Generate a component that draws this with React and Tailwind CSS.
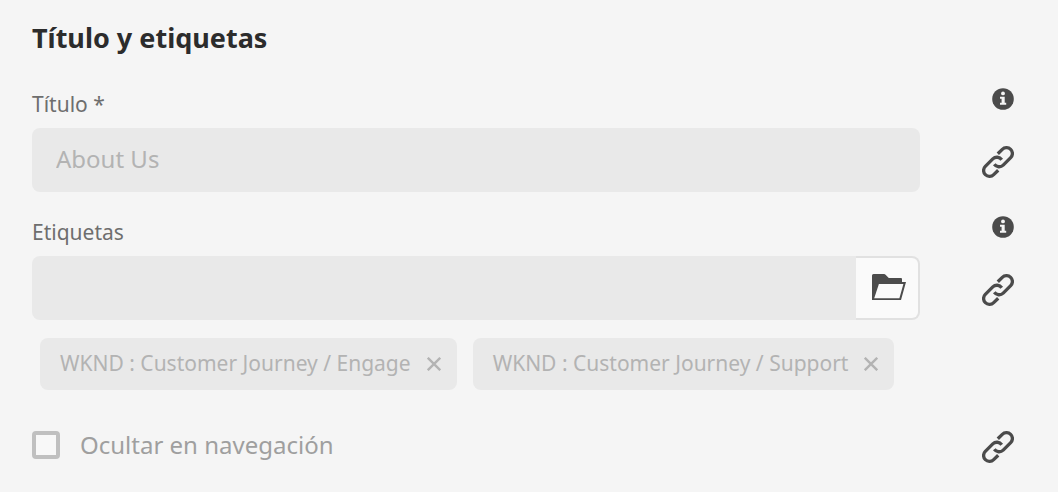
function InfoIcon() {
  return (
    <svg viewBox="0 0 22 22" className="size-[22px]" aria-hidden="true">
      <circle cx="11" cy="11" r="10.8" fill="#4b4b4b" />
      <circle cx="11" cy="5.4" r="1.9" fill="#f5f5f5" />
      <path d="M8 8.7h4.7v6.1h1.5v2H8v-2h1.6v-4.1H8z" fill="#f5f5f5" />
    </svg>
  );
}

function LinkIcon() {
  return (
    <svg
      viewBox="0 0 32 32"
      className="size-8"
      fill="none"
      stroke="#4b4b4b"
      strokeWidth="3.3"
      aria-hidden="true"
    >
      <path d="M15.8 7.8L20.3 3.4A5.9 5.9 0 0 1 28.7 11.7L21.2 19.1A5.9 5.9 0 0 1 12.3 18.3" />
      <path d="M16.2 24.2L11.7 28.6A5.9 5.9 0 0 1 3.3 20.3L10.8 12.9A5.9 5.9 0 0 1 19.7 13.7" />
    </svg>
  );
}

function FolderIcon() {
  return (
    <svg viewBox="0 0 34 26" className="h-[26px] w-[34px]" aria-hidden="true">
      <path
        d="M0 1.5Q0 0 1.5 0H12Q13 0 13.8 .9L16.8 4H29Q30 4 30 5V8H34L29 26H0Z"
        fill="#4b4b4b"
      />
      <path d="M6.9 10H31.4L27.4 24.2H2.2Z" fill="#fafafa" />
    </svg>
  );
}

function CrossIcon() {
  return (
    <svg viewBox="0 0 14 14" className="size-3.5" stroke="#b3b3b3" strokeWidth="2.4" aria-hidden="true">
      <path d="M.8 .8L13.2 13.2M13.2 .8L.8 13.2" />
    </svg>
  );
}

function InfoButton({ label }) {
  return (
    <button type="button" aria-label={label} className="mt-1 flex self-start justify-self-end">
      <InfoIcon />
    </button>
  );
}

function LinkButton({ label }) {
  return (
    <button type="button" aria-label={label} className="flex justify-self-end pt-1">
      <LinkIcon />
    </button>
  );
}

function Tag({ children }) {
  return (
    <li className="flex h-[52px] items-center gap-4 rounded-lg bg-[#e9e9e9] pr-4 pl-5 text-[21px] text-[#b3b3b3]">
      {children}
      <button type="button" aria-label={`Quitar ${children}`} className="flex">
        <CrossIcon />
      </button>
    </li>
  );
}

export default function App() {
  return (
    <form className="min-h-screen bg-[#f5f5f5] pt-5 pr-11 pb-6 pl-8 font-['Noto_Sans',sans-serif]">
      <h2 className="text-[27px] leading-9 font-bold text-[#2c2c2c]">Título y etiquetas</h2>

      <div className="mt-7 grid grid-cols-[1fr_94px] items-center gap-y-2">
        <label htmlFor="titulo" className="pt-1 text-[21px] leading-8 text-[#6e6e6e]">
          Título *
        </label>
        <InfoButton label="Información de título" />
        <input
          id="titulo"
          type="text"
          disabled
          defaultValue="About Us"
          className="h-16 w-full rounded-lg bg-[#e9e9e9] px-6 pb-1 text-[24px] text-[#b3b3b3]"
        />
        <LinkButton label="Herencia de título" />
      </div>

      <div className="mt-5 grid grid-cols-[1fr_94px] items-center gap-y-2">
        <label htmlFor="etiquetas" className="pt-1 text-[21px] leading-8 text-[#6e6e6e]">
          Etiquetas
        </label>
        <InfoButton label="Información de etiquetas" />
        <div className="flex h-16">
          <input
            id="etiquetas"
            type="text"
            disabled
            className="min-w-0 flex-1 rounded-l-lg bg-[#e9e9e9] px-6 pb-1 text-[24px] text-[#b3b3b3]"
          />
          <button
            type="button"
            aria-label="Examinar etiquetas"
            className="flex w-16 items-center justify-center rounded-r-lg border-2 border-l-0 border-[#e1e1e1] bg-[#fafafa] pb-0.5 pl-1"
          >
            <FolderIcon />
          </button>
        </div>
        <LinkButton label="Herencia de etiquetas" />
      </div>

      <ul className="mt-[18px] flex flex-wrap gap-4 pl-2">
        <Tag>WKND : Customer Journey / Engage</Tag>
        <Tag>WKND : Customer Journey / Support</Tag>
      </ul>

      <div className="mt-[35px] flex items-center justify-between">
        <label className="flex items-center gap-5 text-[24px] leading-10 text-[#9f9f9f]">
          <input
            type="checkbox"
            disabled
            className="size-7 appearance-none rounded border-4 border-[#c0c0c0] bg-[#f8f8f8]"
          />
          Ocultar en navegación
        </label>
        <LinkButton label="Herencia de navegación" />
      </div>
    </form>
  );
}
